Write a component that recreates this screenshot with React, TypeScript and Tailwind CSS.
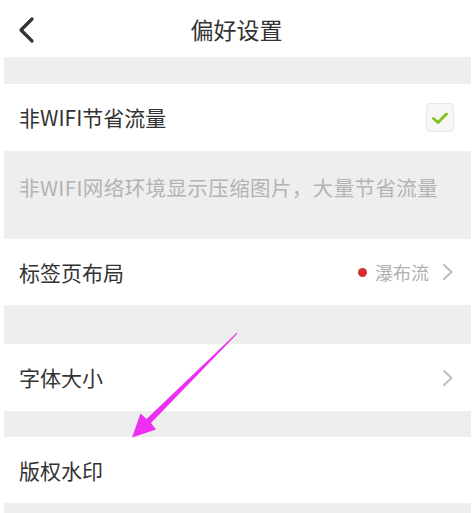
import React from "react";

const font = { fontFamily: '"Noto Sans CJK SC", "Noto Sans", sans-serif' };

function Chevron() {
  return (
    <svg width="12" height="18" viewBox="0 0 12 18" fill="none">
      <path d="M2 2 L9.5 9 L2 16" stroke="#bdbdbd" strokeWidth="2" strokeLinecap="round" strokeLinejoin="round" />
    </svg>
  );
}

function Row({ label, right, h }: { label: string; right?: React.ReactNode; h: string }) {
  return (
    <div className={`flex items-center justify-between bg-white pl-[15px] pr-[17px] ${h}`}>
      <span className="text-[21px] leading-none text-[#333333]">{label}</span>
      {right}
    </div>
  );
}

export default function App() {
  return (
    <div className="relative h-[513px] w-[473px] overflow-hidden bg-white" style={font}>
      <div className="relative flex h-[57px] items-center justify-center">
        <svg className="absolute left-[16px] top-[16px]" width="22" height="28" viewBox="0 0 22 28" fill="none">
          <path d="M16 3 L5 14 L16 25" stroke="#333333" strokeWidth="3.2" strokeLinecap="round" strokeLinejoin="round" />
        </svg>
        <span className="mt-[2px] text-[23px] leading-none text-[#333333]">偏好设置</span>
      </div>
      <div className="ml-[4px] mr-[2px] flex flex-col bg-[#eeeeee]">
        <div className="h-[27px]" />
        <Row
          h="h-[67px]"
          label="非WIFI节省流量"
          right={
            <div className="flex h-[29px] w-[28px] items-center justify-center rounded-[4px] border border-[#e6e6e6] bg-[#f6f6f6]">
              <svg width="18" height="14" viewBox="0 0 18 14" fill="none">
                <path d="M2.5 7.5 L7 11.5 L15.5 3" stroke="#86c21c" strokeWidth="3" strokeLinecap="round" strokeLinejoin="round" />
              </svg>
            </div>
          }
        />
        <div className="h-[88px] pl-[15px] pt-[26px]">
          <span className="text-[20.5px] leading-none tracking-[0.4px] text-[#b3b3b3]">非WIFI网络环境显示压缩图片，大量节省流量</span>
        </div>
        <Row
          h="h-[66px]"
          label="标签页布局"
          right={
            <div className="flex items-center">
              <span className="mr-[8px] h-[9px] w-[9px] rounded-full bg-[#d32f2f]" />
              <span className="mr-[13px] text-[18px] leading-none text-[#b0b0b0]">瀑布流</span>
              <Chevron />
            </div>
          }
        />
        <div className="h-[39px]" />
        <Row h="h-[67px]" label="字体大小" right={<Chevron />} />
        <div className="h-[26px]" />
        <Row h="h-[66px]" label="版权水印" />
        <div className="h-[12px]" />
      </div>
      <svg className="pointer-events-none absolute left-0 top-0" width="473" height="513" viewBox="0 0 473 513">
        <polygon
          points="237.5,333.5 151,423 156,429.5 132,437.5 140.5,413.5 146.5,419 236.5,333"
          fill="#ec2ff0"
        />
      </svg>
    </div>
  );
}
